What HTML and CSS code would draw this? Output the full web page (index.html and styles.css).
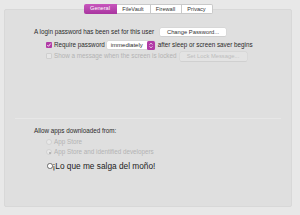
FILE: index.html
```html
<!DOCTYPE html>
<html>
<head>
<meta charset="utf-8">
<link rel="stylesheet" href="styles.css">
</head>
<body>
<div class="window">
  <div class="tabs">
    <div class="tab active">General</div>
    <div class="tab">FileVault</div>
    <div class="tab">Firewall</div>
    <div class="tab">Privacy</div>
  </div>
  <div class="panel">
    <div class="top">
      <div class="row r1">
        <span class="label">A login password has been set for this user</span>
        <span class="btn b-change">Change Password...</span>
      </div>
      <div class="row r2 indent">
        <span class="check on"><svg viewBox="0 0 6 6" width="6" height="6"><path d="M1.3 3.1 L2.5 4.3 L4.7 1.6" fill="none" stroke="#fff" stroke-width="0.9"/></svg></span>
        <span class="label">Require password</span>
        <span class="popup"><span class="ptxt">immediately</span><span class="stepper"><svg viewBox="0 0 8 9" width="8" height="9"><path d="M2.6 3.6 L4 2.2 L5.4 3.6 M2.6 5.4 L4 6.8 L5.4 5.4" fill="none" stroke="#fff" stroke-width="0.8"/></svg></span></span>
        <span class="label">after sleep or screen saver begins</span>
      </div>
      <div class="row r3 indent dis">
        <span class="check off"></span>
        <span class="label">Show a message when the screen is locked</span>
        <span class="btn b-lock">Set Lock Message...</span>
      </div>
    </div>
    <div class="sep"></div>
    <div class="bottom">
      <div class="row a-title"><span class="label">Allow apps downloaded from:</span></div>
      <div class="row radio-row indent dis"><span class="radio off"></span><span class="label">App Store</span></div>
      <div class="row radio-row indent dis"><span class="radio off sel"></span><span class="label">App Store and identified developers</span></div>
      <div class="row big-row indent"><span class="radio white"></span><span class="big">¡Lo que me salga del moño!</span></div>
    </div>
  </div>
</div>
</body>
</html>
```

FILE: styles.css
```css
html, body { margin: 0; padding: 0; }
body {
  width: 300px; height: 215px; overflow: hidden;
  background: #e8e8e8;
  font-family: "Liberation Sans", Arial, sans-serif;
  color: #2b2b2b;
}
.window { padding: 4px 0 0 4px; }
.tabs {
  display: flex; justify-content: center;
  width: 288px; height: 10px;
  margin-bottom: -5px;
  position: relative; z-index: 1;
}
.tab {
  height: 10px; box-sizing: border-box;
  background: #fff;
  border: 0.5px solid #c9c9c9;
  border-left: none;
  font-size: 5.6px; line-height: 9px;
  text-align: center; color: #333;
}
.tab:nth-child(1) { width: 33px; border-radius: 2px 0 0 2px; }
.tab:nth-child(2) { width: 34px; }
.tab:nth-child(3) { width: 31px; }
.tab:nth-child(4) { width: 31px; border-radius: 0 2px 2px 0; border-right: 0.5px solid #c9c9c9; }
.tab.active {
  background: linear-gradient(#c856bd, #a8359f);
  color: #fff; border: none;
}
.panel {
  width: 288px; height: 198px; box-sizing: border-box;
  background: #dfdfdf;
  border: 0.5px solid #d8d8d8;
  border-radius: 2px;
  padding-top: 17px;
}
.row { display: flex; align-items: center; font-size: 6.3px; white-space: nowrap; }
.label { line-height: 8px; }
.r1 { height: 10px; padding-left: 29px; }
.r2 { height: 10px; margin-top: 3px; }
.r3 { height: 10px; margin-top: 1px; }
.indent { padding-left: 41px; }
.dis { color: #b3b3b3; }
.btn {
  height: 8px; box-sizing: border-box;
  background: #fff; border-radius: 1.5px;
  box-shadow: 0 0 0 0.4px #cfcfcf, 0 0.4px 0.4px rgba(0,0,0,0.12);
  font-size: 5.8px; line-height: 8px; text-align: center;
}
.b-change { width: 66px; margin-left: 6px; color: #333; }
.b-lock { width: 67px; margin-left: 3px; background: #e3e3e3; color: #bdbdbd; height: 9px; line-height: 9px; }
.check {
  width: 6px; height: 6px; box-sizing: border-box;
  border-radius: 1px; margin-right: 2px; display: flex;
}
.check.on { background: #b13aa6; }
.check.off { background: #e6e6e6; border: 0.5px solid #cfcfcf; }
.popup {
  display: flex; align-items: center;
  width: 48px; height: 8px; margin: 0 3px 0 2px;
  background: #fff; border-radius: 1.5px;
  box-shadow: 0 0 0 0.4px #cfcfcf;
}
.ptxt { flex: 1; padding-left: 4px; font-size: 6px; line-height: 8px; }
.stepper {
  width: 8px; height: 9px; background: #b13aa6; border-radius: 1.5px;
  display: flex;
}
.sep { height: 1px; background: #e7e7e7; margin: 57px 10px 0 10px; }
.bottom { padding-top: 7px; }
.a-title { height: 10px; padding-left: 29px; }
.radio-row { height: 10px; margin-top: 0.5px; }
.radio {
  width: 6px; height: 6px; box-sizing: border-box;
  border-radius: 50%; margin-right: 2px; position: relative;
}
.radio.off { background: #e8e8e8; border: 0.5px solid #d2d2d2; }
.radio.sel::after {
  content: ""; position: absolute; left: 1.5px; top: 1.5px;
  width: 2px; height: 2px; border-radius: 50%; background: #a9a9a9;
}
.big-row { height: 12px; margin-top: 3px; padding-left: 42px; }
.radio.white { background: #fff; border: 0.6px solid #6a6a6a; margin-right: 0; width: 5.5px; height: 5.5px; }
.big { font-size: 8.3px; line-height: 12px; color: #222; }
```
